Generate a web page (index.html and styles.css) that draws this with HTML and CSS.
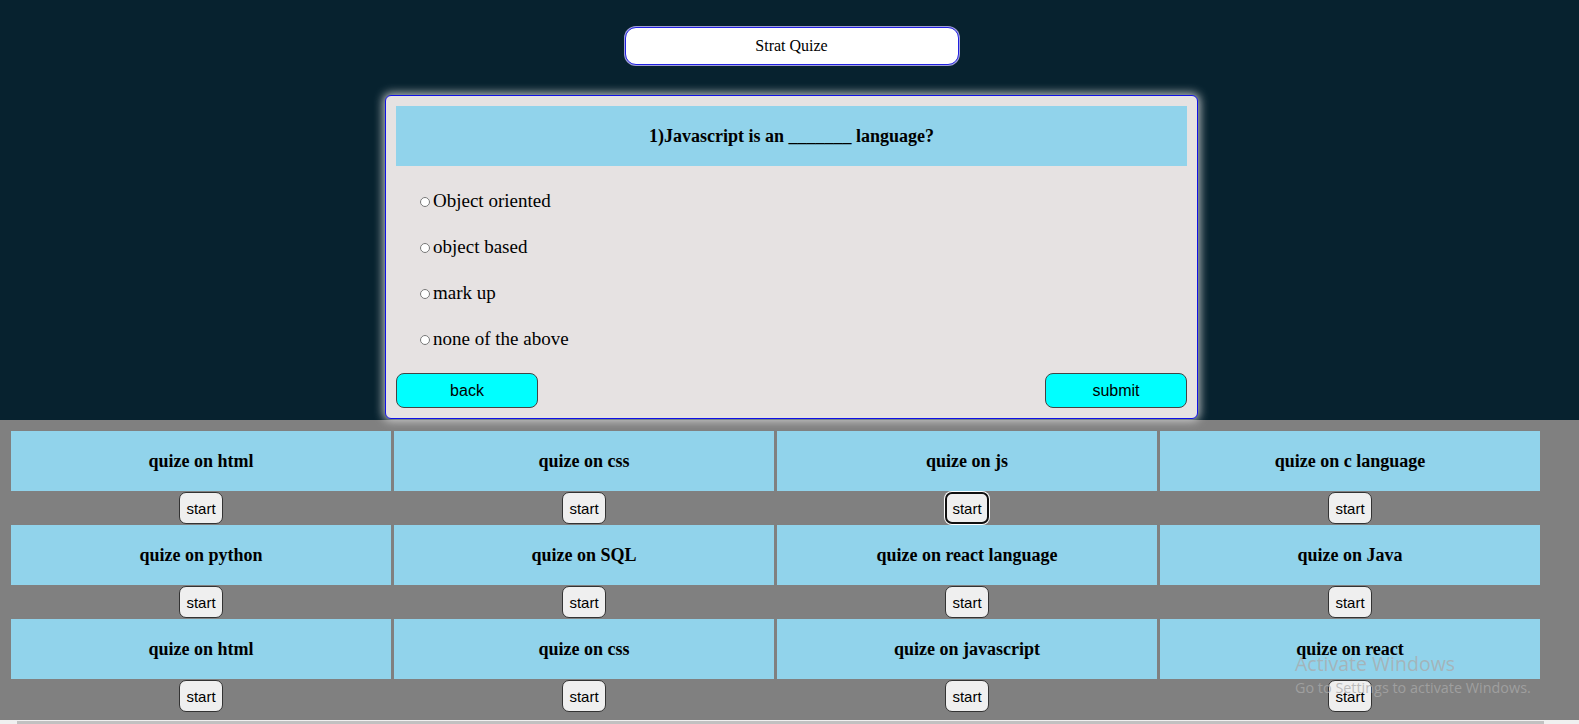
FILE: index.html
```html
<!DOCTYPE html>
<html lang="en">
<head>
<meta charset="utf-8">
<title>Quiz</title>
<link rel="stylesheet" href="styles.css">
</head>
<body>
<div class="top">
  <button class="strat">Strat Quize</button>
  <div class="quiz">
    <div class="qhead">1)Javascript is an _______ language?</div>
    <div class="options">
      <label class="opt"><input type="radio" name="q1"><span>Object oriented</span></label>
      <label class="opt"><input type="radio" name="q1"><span>object based</span></label>
      <label class="opt"><input type="radio" name="q1"><span>mark up</span></label>
      <label class="opt"><input type="radio" name="q1"><span>none of the above</span></label>
    </div>
    <div class="actions">
      <button class="act">back</button>
      <button class="act">submit</button>
    </div>
  </div>
</div>
<div class="bottom">
  <div class="grid">
    <div class="item"><div class="cell">quize on html</div><div class="brow"><button class="start">start</button></div></div>
    <div class="item"><div class="cell">quize on css</div><div class="brow"><button class="start">start</button></div></div>
    <div class="item"><div class="cell">quize on js</div><div class="brow"><button class="start focused">start</button></div></div>
    <div class="item"><div class="cell">quize on c language</div><div class="brow"><button class="start">start</button></div></div>
    <div class="item"><div class="cell">quize on python</div><div class="brow"><button class="start">start</button></div></div>
    <div class="item"><div class="cell">quize on SQL</div><div class="brow"><button class="start">start</button></div></div>
    <div class="item"><div class="cell">quize on react language</div><div class="brow"><button class="start">start</button></div></div>
    <div class="item"><div class="cell">quize on Java</div><div class="brow"><button class="start">start</button></div></div>
    <div class="item"><div class="cell">quize on html</div><div class="brow"><button class="start">start</button></div></div>
    <div class="item"><div class="cell">quize on css</div><div class="brow"><button class="start">start</button></div></div>
    <div class="item"><div class="cell">quize on javascript</div><div class="brow"><button class="start">start</button></div></div>
    <div class="item"><div class="cell">quize on react</div><div class="brow"><button class="start">start</button></div></div>
  </div>
  <div class="watermark">
    <div class="wm1">Activate Windows</div>
    <div class="wm2">Go to Settings to activate Windows.</div>
  </div>
</div>
<div class="hscroll"><div class="thumb"></div></div>
</body>
</html>
```
FILE: styles.css
```css
html, body {
  margin: 0;
  padding: 0;
  overflow: hidden;
}
body {
  font-family: "Liberation Serif", "Times New Roman", serif;
  background: #808080;
  width: 1579px;
  height: 724px;
}
.top {
  background: #07222f;
  height: 420px;
  box-sizing: border-box;
  padding-top: 27px;
  padding-left: 4px;
  position: relative;
  z-index: 2;
}
.strat {
  display: block;
  margin: 0 auto;
  width: 334px;
  height: 38px;
  background: #fff;
  border: 1px solid #2020e0;
  box-shadow: 0 0 0 1px #a0a0d8;
  border-radius: 11px;
  font-family: "Liberation Serif", serif;
  font-size: 16px;
  color: #000;
  padding: 0;
}
.quiz {
  width: 813px;
  box-sizing: border-box;
  margin: 30px auto 0;
  background: #e6e2e2;
  border: 1px solid #1010e8;
  border-radius: 6px;
  padding: 10px;
  box-shadow: 0 0 10px 2px rgba(220, 220, 220, 0.85);
}
.qhead {
  height: 60px;
  background: #91d3eb;
  display: flex;
  align-items: center;
  justify-content: center;
  font-weight: bold;
  font-size: 18px;
  color: #000;
}
.options {
  padding-top: 12px;
  padding-left: 24px;
  display: flex;
  flex-direction: column;
}
.opt {
  height: 46px;
  display: flex;
  align-items: center;
  font-size: 19px;
  color: #000;
}
.opt input {
  width: 10px;
  height: 10px;
  margin: 2px 3px 0 0;
}
.actions {
  margin-top: 11px;
  display: flex;
  justify-content: space-between;
}
.act {
  width: 142px;
  height: 35px;
  background: #00ffff;
  border: 1px solid #444;
  border-radius: 8px;
  font-family: "Liberation Sans", Arial, sans-serif;
  font-size: 16px;
  color: #000;
  padding: 0;
}
.bottom {
  height: 300px;
  box-sizing: border-box;
  padding: 11px 0 0 11px;
  position: relative;
}
.grid {
  display: grid;
  grid-template-columns: repeat(4, 380px);
  column-gap: 3px;
}
.cell {
  height: 60px;
  background: #91d3eb;
  display: flex;
  align-items: center;
  justify-content: center;
  font-weight: bold;
  font-size: 18px;
  color: #000;
}
.brow {
  height: 34px;
  display: flex;
  align-items: center;
  justify-content: center;
}
.start {
  width: 44px;
  height: 32px;
  background: #efefef;
  border: 1px solid #333;
  border-radius: 7px;
  font-family: "Liberation Sans", Arial, sans-serif;
  font-size: 15px;
  color: #000;
  padding: 0;
}
.start.focused {
  border: 2px solid #101010;
  box-shadow: 0 0 0 1px #fff;
}
.watermark {
  position: absolute;
  left: 1295px;
  top: 231px;
  color: rgba(170, 170, 170, 0.75);
  font-family: "Open Sans", sans-serif;
  pointer-events: none;
}
.wm1 {
  font-size: 19.5px;
  line-height: 26px;
}
.wm2 {
  font-size: 14.4px;
  line-height: 22px;
}
.hscroll {
  height: 4px;
  background: #f0f0f0;
  padding-top: 1px;
  box-sizing: border-box;
  padding-left: 17px;
}
.thumb {
  width: 1527px;
  height: 3px;
  background: #c1c1c1;
}
```
